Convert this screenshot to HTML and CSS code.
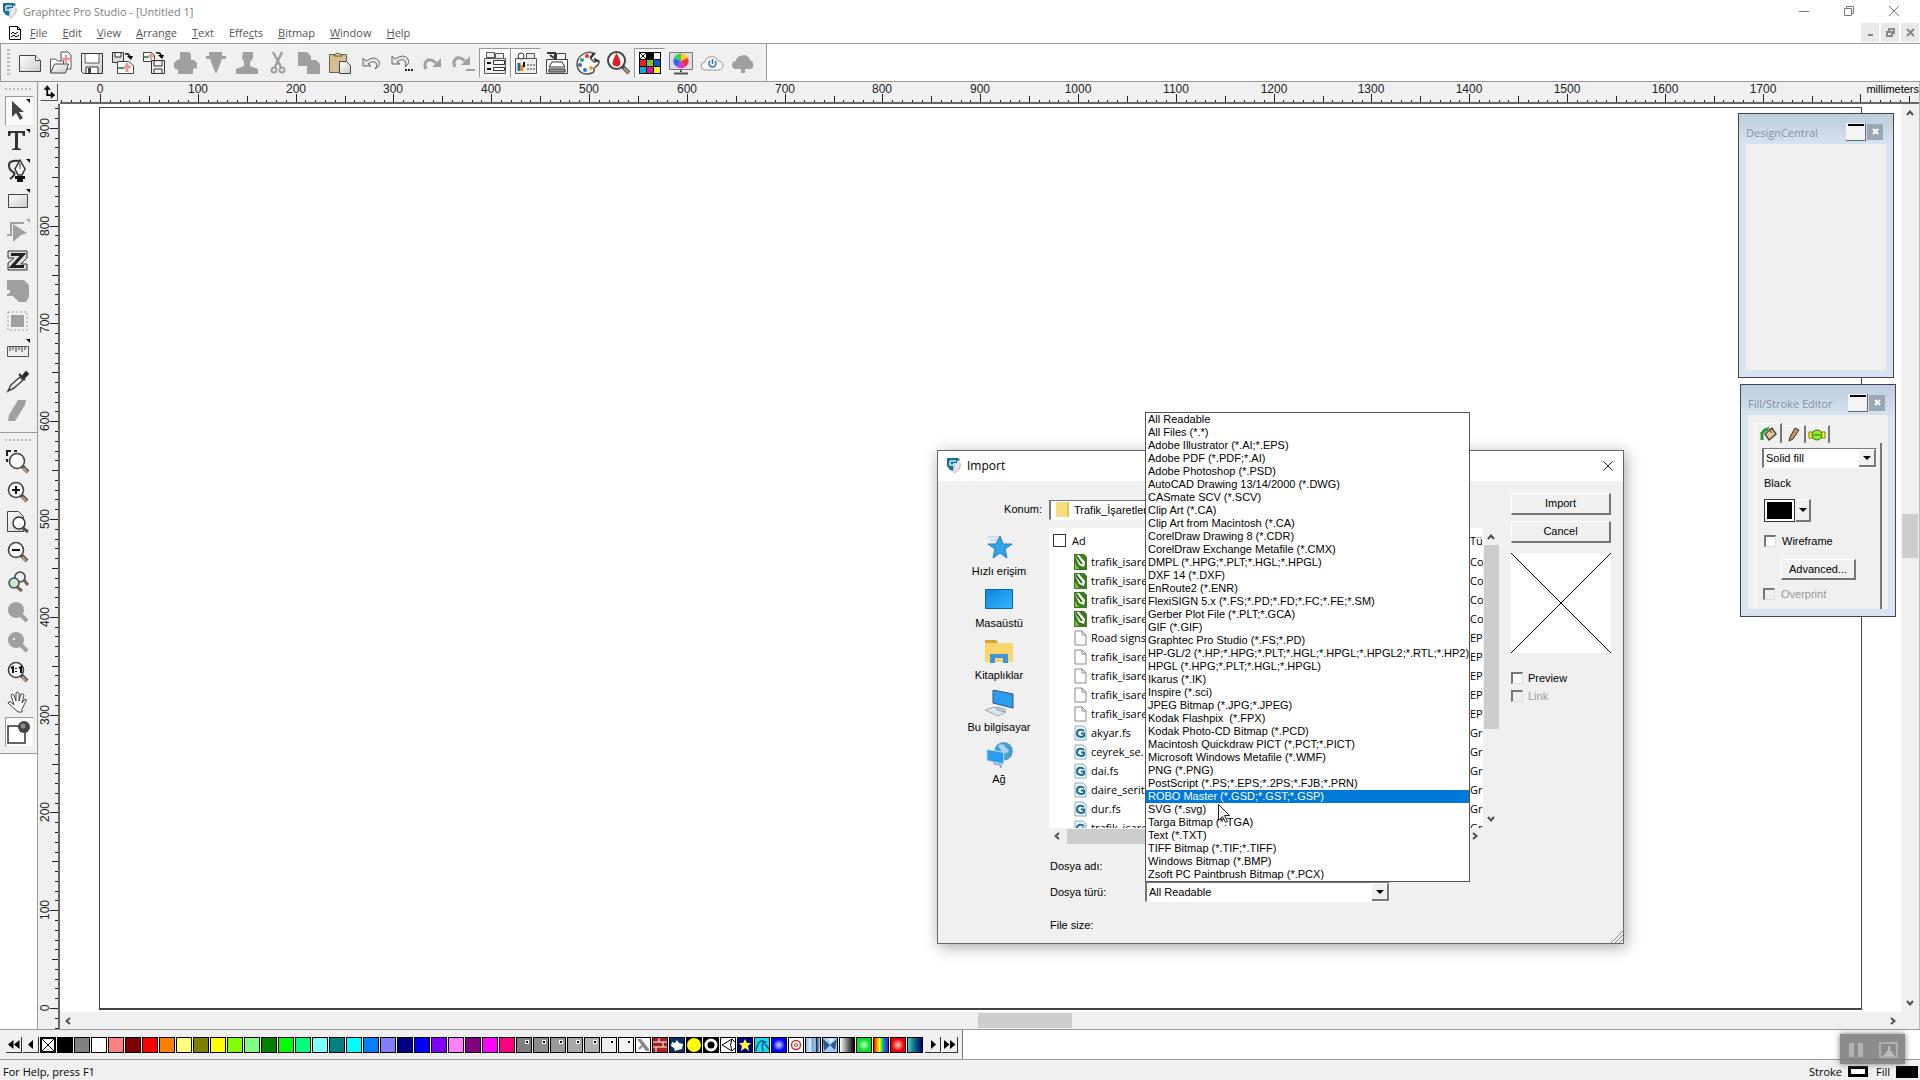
FILE: index.html
```html
<!DOCTYPE html>
<html lang="en">
<head>
<meta charset="utf-8">
<title>Graphtec Pro Studio - [Untitled 1]</title>
<link rel="stylesheet" href="styles.css">
</head>
<body>
<svg class="defs" aria-hidden="true">
  <defs>
    <linearGradient id="paper" x1="0" y1="0" x2="1" y2="1"><stop offset="0" stop-color="#fff"/><stop offset="1" stop-color="#ccc"/></linearGradient>
    <linearGradient id="sky" x1="0" y1="0" x2="1" y2="1"><stop offset="0" stop-color="#0c86e0"/><stop offset="1" stop-color="#35b4ff"/></linearGradient>
    <symbol id="app" viewBox="0 0 16 16"><path d="M1 1h13v6c0 4-3 7-6 8-3-1-5-3-6-6z" fill="#e4eaee"/><path d="M1 0h11l2 2-3 1v2H9L8 13 4 12 1 8z" fill="#1a6f95"/><path d="M4 3h6M4 3v4h4V5M8 7v7" stroke="#cfe8f2" stroke-width="1.500" fill="none"/><path d="M14 5c1 5-2 8-6 10" stroke="#d99" fill="none"/></symbol>
    <symbol id="glass" viewBox="0 0 24 24"><path d="M15 15l6 6" stroke="#555" stroke-width="4"/><path d="M16 17l4 4" stroke="#b49a78" stroke-width="2.500"/><circle cx="10" cy="10" r="7.500" fill="#fafafa" stroke="#444" stroke-width="1.600"/></symbol>
    <symbol id="glass-off" viewBox="0 0 24 24"><circle cx="10" cy="10" r="8" fill="#a0a0a0"/><path d="M14 14l7 7" stroke="#a0a0a0" stroke-width="4"/></symbol>
    <symbol id="corner" viewBox="0 0 24 24"><path d="M20 0h4v4z" fill="#000"/></symbol>
    <symbol id="cdr" viewBox="0 0 13 16"><path d="M0 0h10l3 3v13H0z" fill="#3d7a1c"/><path d="M1 2l4-1 6 7-1 5-5-2z" fill="#fff"/><path d="M2 2l6 8" stroke="#2b6b12" stroke-width="2"/><path d="M1 9l4 6H1z" fill="#7bc043"/></symbol>
    <symbol id="page" viewBox="0 0 13 16"><path d="M1 1h7l4 4v10H1z" fill="#fff" stroke="#888"/><path d="M8 1v4h4" fill="none" stroke="#888"/></symbol>
    <symbol id="gfile" viewBox="0 0 13 16"><path d="M1 1h8l3 3v11H1z" fill="#eef7fa" stroke="#8ab"/><path d="M10 6C8 4 3 4 3 8.500S9 12 10 11V8.500H7" fill="none" stroke="#1d6d94" stroke-width="2"/></symbol>
    <symbol id="up" viewBox="0 0 8 6"><path d="M1 5l3-3.500L7 5" fill="none" stroke="#505050" stroke-width="2"/></symbol>
    <symbol id="down" viewBox="0 0 8 6"><path d="M1 1l3 3.500L7 1" fill="none" stroke="#505050" stroke-width="2"/></symbol>
    <symbol id="left" viewBox="0 0 6 8"><path d="M5 1L1.500 4 5 7" fill="none" stroke="#505050" stroke-width="2"/></symbol>
    <symbol id="right" viewBox="0 0 6 8"><path d="M1 1l3.500 3L1 7" fill="none" stroke="#505050" stroke-width="2"/></symbol>
  </defs>
</svg>

<header class="titlebar">
  <svg class="i16"><use href="#app"/></svg>
  <h1>Graphtec Pro Studio - [Untitled 1]</h1>
  <div class="winbtns">
    <button aria-label="Minimize"><svg viewBox="0 0 12 12"><path d="M1 6.500h10"/></svg></button>
    <button aria-label="Restore"><svg viewBox="0 0 12 12"><path d="M1.500 3.500h7v7h-7zM3.500 3.500v-2h7v7h-2"/></svg></button>
    <button aria-label="Close"><svg viewBox="0 0 12 12"><path d="M1 1l10 10M11 1L1 11"/></svg></button>
  </div>
</header>

<nav class="menubar">
  <svg class="docicon" viewBox="0 0 12 14"><path d="M.5.500h8l3 3v10H.5z" fill="#fff" stroke="#000"/><path d="M8.500 0v3.500H12M2 8l2-2 2 2 3-2M2 11l3-2 2 2 3-2" fill="none" stroke="#000"/></svg>
  <a href="#"><u>F</u>ile</a><a href="#"><u>E</u>dit</a><a href="#"><u>V</u>iew</a><a href="#"><u>A</u>rrange</a><a href="#"><u>T</u>ext</a><a href="#">Effe<u>c</u>ts</a><a href="#"><u>B</u>itmap</a><a href="#"><u>W</u>indow</a><a href="#"><u>H</u>elp</a>
  <div class="mdibtns">
    <button aria-label="Minimize document"><svg viewBox="0 0 9 9"><path d="M2 7h5"/></svg></button>
    <button aria-label="Restore document"><svg viewBox="0 0 9 9"><path d="M1 4h5v4H1zM3 4V1h5v4H6"/></svg></button>
    <button aria-label="Close document"><svg viewBox="0 0 9 9"><path d="M1 1l7 7M8 1L1 8"/></svg></button>
  </div>
</nav>

<div class="toolrow">
  <div class="toolbar">
    <span class="grip"></span>
    <button aria-label="New"><svg viewBox="0 0 24 24"><path d="M1.500 4.500h16l5 5v11h-21z" fill="url(#paper)" stroke="#444"/><path d="M17.500 4.500v5h5" fill="#fff" stroke="#444"/></svg></button>
    <button aria-label="Open"><svg viewBox="0 0 24 24"><path d="M12 1h7l3 3v14H12z" fill="#fff" stroke="#555"/><path d="M17 4v8M13 8h8" stroke="#e99" stroke-width="2.500"/><path d="M1.500 22V8h5l2 2h6v3" fill="#fff" stroke="#555"/><path d="M1.500 22l4-9h14l-3 9z" fill="url(#paper)" stroke="#444"/></svg></button>
    <button aria-label="Save"><svg viewBox="0 0 24 24"><path d="M1.500 2.500h21v20h-19l-2-2z" fill="url(#paper)" stroke="#333"/><path d="M5 3v9h14V3" fill="#fff" stroke="#555"/><path d="M6 22v-6h12v6" fill="#fff" stroke="#333"/><path d="M8 17h3v5H8z" fill="#444"/></svg></button>
    <button aria-label="Import"><svg viewBox="0 0 24 24"><path d="M1.500 1.500h11v10h-11zM4 2v4h6V2" fill="#ddd" stroke="#333"/><path d="M6.500 10.500h11l5 4v8h-16z" fill="#fff" stroke="#444"/><path d="M7 17h6" stroke="#3a5" stroke-width="2"/><path d="M16 12v9M13 16h7" stroke="#e99" stroke-width="3"/><path d="M14 3q4-1 5 3" fill="none" stroke="#111" stroke-width="1.500"/><path d="M16 5h6l-2 4z"/></svg></button>
    <button aria-label="Export"><svg viewBox="0 0 24 24"><path d="M1.500 1.500h8l3 3v6h-11z" fill="#fff" stroke="#444"/><path d="M2 6h5" stroke="#3a5" stroke-width="2"/><path d="M9 2v7M6 5h6" stroke="#e99" stroke-width="2"/><path d="M9.500 9.500h13v13h-13zM12 10v5h8v-5M12 22v-4h8v4" fill="#eee" stroke="#333"/><path d="M14 2q4-1 5 2" fill="none" stroke="#111" stroke-width="1.500"/><path d="M16 4h6l-2 4z"/></svg></button>
    <button disabled aria-label="Print"><svg viewBox="0 0 24 24"><path d="M7 1h9l2 2v6h3l3 3v5l-4 1v5H5v-4l-4-2v-5l3-3 3-1z" fill="#a0a0a0"/></svg></button>
    <button disabled aria-label="Cut plot"><svg viewBox="0 0 24 24"><path d="M5 1h13v4h4v3h-4l-3 8-3 7-3-7-3-8H2V5h3z" fill="#a0a0a0"/></svg></button>
    <button disabled aria-label="Engrave"><svg viewBox="0 0 24 24"><path d="M8 1h10v6l-3 4v4l8 3v5H1v-5l8-3v-4L7 7z" fill="#a0a0a0"/></svg></button>
    <button disabled aria-label="Cut"><svg viewBox="0 0 24 24"><path d="M7 1l8 15M16 1L9 16" stroke="#a0a0a0" stroke-width="2.500"/><circle cx="8" cy="19" r="2.500" fill="none" stroke="#a0a0a0" stroke-width="2"/><circle cx="16" cy="19" r="2.500" fill="none" stroke="#a0a0a0" stroke-width="2"/></svg></button>
    <button disabled aria-label="Copy"><svg viewBox="0 0 24 24"><path d="M1 1h9l4 4v4h5l4 4v10H10v-8H1z" fill="#a0a0a0"/></svg></button>
    <button aria-label="Paste"><svg viewBox="0 0 24 24"><path d="M1.500 3.500h17v18h-17z" fill="#d9bd90" stroke="#665"/><path d="M6 5q0-2 2-2 1-2 4 0 2 0 2 2z" fill="#f5e060" stroke="#554"/><path d="M11.500 10.500h7l4 4v8h-11z" fill="url(#paper)" stroke="#444"/></svg></button>
    <button aria-label="Undo"><svg viewBox="0 0 24 24"><path d="M4 7v8h8l-3-2q5-4 8-1 2 3-1 6 6-3 4-8-4-6-13 0z" fill="#e4e4e4" stroke="#666"/></svg></button>
    <button aria-label="Undo steps"><svg viewBox="0 0 24 24"><path d="M2 5v8h8l-3-2q5-4 8-1 2 3 0 6 5-3 3-8-4-6-13 0z" fill="#e4e4e4" stroke="#666"/><path d="M15 19h2m1 0h2m1 0h2" stroke="#222" stroke-width="2"/></svg></button>
    <button disabled aria-label="Redo"><svg viewBox="0 0 24 24"><path d="M5 18Q2 12 7 9q4-1 8 3" fill="none" stroke="#a0a0a0" stroke-width="3"/><path d="M20 7v9h-9z" fill="#a0a0a0"/></svg></button>
    <button disabled aria-label="Redo steps"><svg viewBox="0 0 24 24"><path d="M3 16Q0 10 5 7q4-1 8 3" fill="none" stroke="#a0a0a0" stroke-width="3"/><path d="M18 5v9H9zM14 18h9v2h-9z" fill="#a0a0a0"/></svg></button>
    <button class="on" aria-label="DesignCentral"><svg viewBox="0 0 24 24"><path d="M3.500 1.500h8v5h-8zM12.500 2.500h8v5h-8zM1.500 7.500h21v15h-21z" fill="#eee" stroke="#555"/><path d="M10.500 9.500h11v4h-11zM10.500 16.500h11v3h-11z" fill="#fff" stroke="#333"/><path d="M4 12h4M4 18h4" stroke="#111" stroke-width="2"/></svg></button>
    <button class="on" aria-label="Fill/Stroke Editor"><svg viewBox="0 0 24 24"><path d="M1.500 7.500h21v15h-21zM12.500 2.500h8v5h-8z" fill="#eee" stroke="#555"/><circle cx="7" cy="5" r="3" fill="#fff" stroke="#333"/><path d="M5 12v8" stroke="#26a" stroke-width="3"/><path d="M8 14v6" stroke="#e80" stroke-width="3"/><path d="M10 11v5" stroke="#111" stroke-width="2"/><path d="M13 14h8M13 18h8" stroke="#333" stroke-dasharray="2 1"/></svg></button>
    <button aria-label="Plotter"><svg viewBox="0 0 24 24"><path d="M1.500 8.500h21v14h-21zM11.500 2.500h9v6h-9z" fill="#f4f4f4" stroke="#444"/><path d="M2 2h8v6M5 4l4 3" stroke="#333" stroke-width="2" fill="none"/><path d="M7 11h10l3 5H4z" fill="#fff" stroke="#333"/><path d="M4 18h16v3H4z" fill="#99a" stroke="#333"/></svg></button>
    <button aria-label="Swatches"><svg viewBox="0 0 24 24"><path d="M17 2C9-1 1 6 1 13c0 6 4 10 10 10 4 0 8-2 7-4-2-3 6-3 5-9l-5 1-3-3z" fill="#fafafa" stroke="#555" stroke-width="1.500"/><circle cx="11" cy="5" r="2" fill="#d33"/><circle cx="6" cy="9" r="2" fill="#2a8"/><circle cx="4" cy="14" r="2" fill="#36a"/><circle cx="9" cy="19" r="2" fill="#27d"/><circle cx="15" cy="17" r="2" fill="#e93"/><path d="M14 7l5-5M18 8l4 2" stroke="#333" stroke-width="2"/></svg></button>
    <button aria-label="Color trace"><svg viewBox="0 0 24 24"><path d="M15 15l7 7" stroke="#555" stroke-width="4"/><path d="M17 17l5 5" stroke="#b49a78" stroke-width="2"/><circle cx="9.500" cy="9.500" r="8.500" fill="#fff" stroke="#444" stroke-width="2"/><path d="M9.500 2Q4 12 6 14q4 3 7 0 2-3-3.500-12z" fill="#d22"/></svg></button>
    <button class="on" aria-label="Color palette"><svg viewBox="0 0 24 24"><path d="M1 1h22v22H1z"/><path d="M2 2h6v6H2zM16 2h6v6h-6z" fill="#fff"/><path d="M2 2l6 6m0-6L2 8" stroke="#111"/><path d="M2 9h6v6H2z" fill="#e22"/><path d="M9 9h6v6H9z" fill="#7c3"/><path d="M16 9h6v6h-6z" fill="#15c"/><path d="M2 16h6v6H2z" fill="#1ad"/><path d="M9 16h6v6H9z" fill="#d19"/><path d="M16 16h6v6h-6z" fill="#fe2"/></svg></button>
    <button aria-label="Color management"><svg viewBox="0 0 24 24"><path d="M.5 1.500h23v17H.5z" fill="#ddd" stroke="#777"/><path d="M12 10V2.500A7.500 7.500 0 0 1 19 7z" fill="#fc2"/><path d="M12 10l7-3a7.500 7.500 0 0 1-3 9z" fill="#e33"/><path d="M12 10l4 6a7.500 7.500 0 0 1-8 0z" fill="#d3d"/><path d="M12 10l-4 6a7.500 7.500 0 0 1-3-9z" fill="#36e"/><path d="M12 10L5 7a7.500 7.500 0 0 1 7-4.500z" fill="#3c5"/><path d="M12 19v2M5 22.500h14" stroke="#555" stroke-width="2"/></svg></button>
    <button aria-label="Cloud"><svg viewBox="0 0 24 24"><path d="M5 19a4 4 0 0 1 0-8 5 5 0 0 1 5-5 6 6 0 0 1 8 4 4.500 4.500 0 0 1 1 9z" fill="#f6f6f6" stroke="#999"/><path d="M10 10a3.500 3.500 0 1 0 5 0M12.500 8v5" fill="none" stroke="#27b" stroke-width="1.500"/></svg></button>
    <button disabled aria-label="Cloud upload"><svg viewBox="0 0 24 24"><path d="M5 18a4 4 0 0 1 0-8 5 5 0 0 1 5-5 6 6 0 0 1 9 4 5 5 0 0 1 1 9h-6v4h-4v-4z" fill="#a0a0a0"/></svg></button>
  </div>
</div>

<main class="workspace">
  <aside class="tools">
    <div class="toolset">
      <span class="hgrip"></span>
      <button class="on" aria-label="Select"><svg viewBox="0 0 24 24"><path d="M6 2v16l4-4 4 7 3-2-4-6h5z" fill="#444"/><use href="#corner"/></svg></button>
      <button aria-label="Text"><svg viewBox="0 0 24 24"><path d="M2 2h17v5h-2l-1-3h-4v15l3 1v1H6v-1l3-1V4H5L4 7H2z" fill="#333"/><use href="#corner"/></svg></button>
      <button aria-label="Bezier"><svg viewBox="0 0 24 24"><path d="M13 2Q3 1 3 6t4 7-3 7" fill="none" stroke="#333" stroke-width="2"/><path d="M14 1l5 9-3 6h-4l-3-6z" fill="#fff" stroke="#333" stroke-width="1.500"/><path d="M14 4v6" stroke="#333"/><path d="M9 17h10v3H9zM11 20h6v3h-6z" fill="#111"/><use href="#corner"/></svg></button>
      <button aria-label="Rectangle"><svg viewBox="0 0 24 24"><path d="M2.500 5.500h19v13h-19z" fill="url(#paper)" stroke="#444"/><use href="#corner"/></svg></button>
      <button disabled aria-label="Select point"><svg viewBox="0 0 24 24"><path d="M1 16h4V4h13" fill="none" stroke="#a0a0a0" stroke-width="2"/><path d="M7 5l14 9-6 2-8 7zM20 0h4v4z" fill="#a0a0a0"/></svg></button>
      <button aria-label="Outline"><svg viewBox="0 0 24 24"><path d="M2 2h19v7l-6 6h6v6H2v-7l6-5H2z" fill="#ddd" stroke="#333"/><path d="M5 5.500h12L6 17.500h12" fill="none" stroke="#222" stroke-width="3"/></svg></button>
      <button disabled aria-label="Combine"><svg viewBox="0 0 24 24"><path d="M1 1h17l5 5v12l-3 5h-7l-6-6H1v-2l3-1v-3H1z" fill="#a0a0a0"/></svg></button>
      <button disabled aria-label="Crop"><svg viewBox="0 0 24 24"><path d="M2 3h19v18H2z" fill="none" stroke="#a0a0a0" stroke-dasharray="2 2"/><path d="M5 6h13v12H5z" fill="#a0a0a0"/></svg></button>
      <button aria-label="Measure"><svg viewBox="0 0 24 24"><path d="M1.500 7.500h21v10h-21z" fill="#eee" stroke="#555"/><path d="M4 8v4m3-4v3m3-3v5m3-5v3m3-3v5m3-5v3" stroke="#333"/><use href="#corner"/></svg></button>
      <button aria-label="Eyedropper"><svg viewBox="0 0 24 24"><path d="M2 22l3-6 9-8 3 3-9 8z" fill="#fff" stroke="#444" stroke-width="1.500"/><path d="M13 5l6 6M16 8l4-5 2 2-4 4z" stroke="#333" stroke-width="2"/></svg></button>
      <button disabled aria-label="Knife"><svg viewBox="0 0 24 24"><path d="M12 1h8l-1 5-10 16H2l1-6z" fill="#a0a0a0"/></svg></button>
    </div>
    <div class="toolset second">
      <span class="hgrip"></span>
      <button aria-label="Zoom area"><svg viewBox="0 0 24 24"><use href="#glass" x="1" y="1"/><path d="M1 6V1h4m3 0h3M1 9v3" fill="none" stroke="#222" stroke-width="2"/></svg></button>
      <button aria-label="Zoom in"><svg viewBox="0 0 24 24"><use href="#glass"/><path d="M6 10h8m-4-4v8" stroke="#111" stroke-width="2"/></svg></button>
      <button aria-label="Zoom page"><svg viewBox="0 0 24 24"><path d="M1.500 1.500h11l5 5v15h-16z" fill="url(#paper)" stroke="#444"/><circle cx="13" cy="13" r="6" fill="#fff" stroke="#333" stroke-width="1.500"/><path d="M17 18l5 4" stroke="#555" stroke-width="3"/></svg></button>
      <button aria-label="Zoom out"><svg viewBox="0 0 24 24"><use href="#glass"/><path d="M6 10h8" stroke="#111" stroke-width="2"/></svg></button>
      <button aria-label="Zoom selected"><svg viewBox="0 0 24 24"><path d="M18 10l4 5M11 17l5 4" stroke="#765" stroke-width="3"/><circle cx="14" cy="7" r="5" fill="#eee" stroke="#444" stroke-width="1.500"/><circle cx="8" cy="13" r="5" fill="#cfe5cf" stroke="#354" stroke-width="1.500"/></svg></button>
      <button disabled aria-label="Zoom previous"><svg viewBox="0 0 24 24"><use href="#glass-off"/></svg></button>
      <button disabled aria-label="Zoom next"><svg viewBox="0 0 24 24"><use href="#glass-off"/><path d="M7 9h2" stroke="#eee" stroke-width="2"/></svg></button>
      <button aria-label="Zoom 1:1"><svg viewBox="0 0 24 24"><use href="#glass"/><path d="M5 8l2-1v6m6-5l2-1v6M10 8v1m0 2v1" fill="none" stroke="#111" stroke-width="2"/></svg></button>
      <button aria-label="Pan"><svg viewBox="0 0 24 24"><path d="M12 22L2 13q0-2 3-1l3 3L5 5q1-2 3 0l2 6V3q1-2 3 0v8l2-7q2-1 3 1l-2 8 3-4q2 0 1 2l-4 8v3z" fill="#fff" stroke="#444"/></svg></button>
      <button class="on" aria-label="Fill and stroke"><svg viewBox="0 0 24 24"><path d="M2 6h17v17H2z" fill="#fff" stroke="#333" stroke-width="1.500"/><circle cx="18" cy="7" r="6" fill="#444"/><circle cx="17" cy="6" r="2.500" fill="#888"/></svg></button>
    </div>
  </aside>
  <div class="rulercol">
    <button class="origin" aria-label="Ruler origin"><svg viewBox="0 0 18 17"><path d="M7 5v7h5" fill="none" stroke="#000" stroke-width="2"/><path d="M3 6l4-5 4 5zM11 8l5 4-5 4z"/></svg></button>
    <svg class="vruler" id="vruler"></svg>
  </div>
  <div class="desk">
    <div class="hrulerbox"><svg class="hruler" id="hruler"></svg><span>millimeters</span></div>
    <div class="view"><div class="sheet"></div></div>
    <div class="vscroll"><svg class="v"><use href="#up"/></svg><i></i><svg class="v"><use href="#down"/></svg></div>
    <div class="hscroll"><svg class="h"><use href="#left"/></svg><i></i><svg class="h"><use href="#right"/></svg></div>
  </div>

  <section class="panel design">
    <header><h2>DesignCentral</h2><button class="roll" aria-label="Roll up"></button><button class="x" aria-label="Close panel"><svg viewBox="0 0 7 7"><path d="M1 1l5 5M6 1L1 6"/></svg></button></header>
    <div class="pbody"></div>
  </section>

  <section class="panel fill">
    <header><h2>Fill/Stroke Editor</h2><button class="roll" aria-label="Roll up"></button><button class="x" aria-label="Close panel"><svg viewBox="0 0 7 7"><path d="M1 1l5 5M6 1L1 6"/></svg></button></header>
    <div class="pbody">
      <div class="tabs">
        <button class="cur" aria-label="Fill"><svg viewBox="0 0 18 16"><path d="M3 6v8" stroke="#293" stroke-width="3"/><path d="M4 7q0-3 5-4" fill="none" stroke="#293" stroke-width="3"/><path d="M6 8l7-6 4 6-7 6z" fill="#e3c9a0" stroke="#543" stroke-width="1.500"/><path d="M9 1l4 6" stroke="#543"/></svg></button>
        <button aria-label="Stroke"><svg viewBox="0 0 18 16"><path d="M5 14l1-4 5-9 4 2-6 9z" fill="#b89468" stroke="#432"/></svg></button>
        <button aria-label="Overprint"><svg viewBox="0 0 18 16"><path d="M1 5h16v6H1z" fill="#ff3" stroke="#770"/><circle cx="9" cy="8" r="5" fill="#8e3" stroke="#461"/><path d="M5 8h8" stroke="#471"/></svg></button>
      </div>
      <div class="fillform">
        <label class="combo"><select aria-label="Fill type"><option>Solid fill</option></select><span class="arrow"></span></label>
        <p>Black</p>
        <div class="well"><button class="chip" aria-label="Fill color"></button><button class="arrow" aria-label="Pick color"></button></div>
        <label class="check"><input type="checkbox">Wireframe</label>
        <button class="btn adv">Advanced...</button>
        <label class="check off"><input type="checkbox" disabled>Overprint</label>
      </div>
    </div>
  </section>

  <section class="dialog" role="dialog" aria-labelledby="dlg">
    <header><svg class="i16"><use href="#app"/></svg><h2 id="dlg">Import</h2><button aria-label="Close dialog"><svg viewBox="0 0 12 12"><path d="M1.500 1.500l9 9m0-9l-9 9"/></svg></button></header>
    <div class="dbody">
      <label class="loclabel" for="loc">Konum:</label>
      <div class="combo loc"><svg viewBox="0 0 14 16"><path d="M0 0h11l2 3v12H0z" fill="#f9dc7e"/><path d="M11 0h2v15h-2z" fill="#e8c45e"/></svg><select id="loc"><option>Trafik_İşaretleri</option></select></div>
      <nav class="places">
        <a href="#"><svg viewBox="0 0 30 24"><path d="M16 1l3 8h9l-7 5 2 9-7-5-7 5 2-9-7-5h8z" fill="#35a3ea" stroke="#1c7fc8"/><path d="M3 2h11M6 5h7" stroke="#9cf"/></svg>Hızlı erişim</a>
        <a href="#"><svg viewBox="0 0 30 24"><path d="M1.500 2.500h27v19h-27z" fill="url(#sky)" stroke="#0763ae"/></svg>Masaüstü</a>
        <a href="#"><svg viewBox="0 0 30 24"><path d="M1 1h11l2 3h15v19H1z" fill="#fbd56b"/><path d="M1 1h11l2 3H1z" fill="#d9a437"/><path d="M6 24v-9h18v9h-5v-5h-8v5z" fill="#3d95dc"/></svg>Kitaplıklar</a>
        <a href="#"><svg viewBox="0 0 30 26"><path d="M9 0l20 4v14L9 13z" fill="#2a9df0" stroke="#357"/><path d="M13 17l8 2v3l-8-2zM1 20l9-3 12 5-8 4z" fill="#dde4ea" stroke="#9ab"/></svg>Bu bilgisayar</a>
        <a href="#"><svg viewBox="0 0 30 28"><circle cx="20" cy="10" r="10" fill="#4b9fce"/><path d="M14 4q6-4 8 2l4 3q-4 6-8 1z" fill="#a8d8ee"/><path d="M2 8l18 3v13L2 20z" fill="#2a9df0" stroke="#cde"/><path d="M9 23l8 2v3" stroke="#9ab" stroke-width="2" fill="none"/></svg>Ağ</a>
      </nav>
      <div class="filebox">
        <div class="files">
          <table>
            <thead><tr><th><label><input type="checkbox">Ad</label></th><th>Tür</th></tr></thead>
            <tbody>
              <tr><td><svg><use href="#cdr"/></svg>trafik_isare</td><td>Co</td></tr>
              <tr><td><svg><use href="#cdr"/></svg>trafik_isare</td><td>Co</td></tr>
              <tr><td><svg><use href="#cdr"/></svg>trafik_isare</td><td>Co</td></tr>
              <tr><td><svg><use href="#cdr"/></svg>trafik_isare</td><td>Co</td></tr>
              <tr><td><svg><use href="#page"/></svg>Road signs</td><td>EP</td></tr>
              <tr><td><svg><use href="#page"/></svg>trafik_isare</td><td>EP</td></tr>
              <tr><td><svg><use href="#page"/></svg>trafik_isare</td><td>EP</td></tr>
              <tr><td><svg><use href="#page"/></svg>trafik_isare</td><td>EP</td></tr>
              <tr><td><svg><use href="#page"/></svg>trafik_isare</td><td>EP</td></tr>
              <tr><td><svg><use href="#gfile"/></svg>akyar.fs</td><td>Gr</td></tr>
              <tr><td><svg><use href="#gfile"/></svg>ceyrek_se.</td><td>Gr</td></tr>
              <tr><td><svg><use href="#gfile"/></svg>dai.fs</td><td>Gr</td></tr>
              <tr><td><svg><use href="#gfile"/></svg>daire_serit</td><td>Gr</td></tr>
              <tr><td><svg><use href="#gfile"/></svg>dur.fs</td><td>Gr</td></tr>
              <tr><td><svg><use href="#gfile"/></svg>trafik_isare</td><td>Gr</td></tr>
            </tbody>
          </table>
        </div>
        <div class="vscroll"><svg class="v"><use href="#up"/></svg><i></i><svg class="v"><use href="#down"/></svg></div>
        <div class="hscroll"><svg class="h"><use href="#left"/></svg><i></i><svg class="h"><use href="#right"/></svg></div>
      </div>
      <div class="fields">
        <label for="fname">Dosya adı:</label><input class="sunken" id="fname" type="text">
        <label for="ftype">Dosya türü:</label>
        <div class="combo type"><select id="ftype"><option>All Readable</option></select><span class="arrow"></span>
          <ul class="options" role="listbox" aria-label="Dosya türü">
            <li>All Readable</li><li>All Files (*.*)</li><li>Adobe Illustrator (*.AI;*.EPS)</li><li>Adobe PDF (*.PDF;*.AI)</li><li>Adobe Photoshop (*.PSD)</li><li>AutoCAD Drawing 13/14/2000 (*.DWG)</li><li>CASmate SCV (*.SCV)</li><li>Clip Art (*.CA)</li><li>Clip Art from Macintosh (*.CA)</li><li>CorelDraw Drawing 8 (*.CDR)</li><li>CorelDraw Exchange Metafile (*.CMX)</li><li>DMPL (*.HPG;*.PLT;*.HGL;*.HPGL)</li><li>DXF 14 (*.DXF)</li><li>EnRoute2 (*.ENR)</li><li>FlexiSIGN 5.x (*.FS;*.PD;*.FD;*.FC;*.FE;*.SM)</li><li>Gerber Plot File (*.PLT;*.GCA)</li><li>GIF (*.GIF)</li><li>Graphtec Pro Studio (*.FS;*.PD)</li><li>HP-GL/2 (*.HP;*.HPG;*.PLT;*.HGL;*.HPGL;*.HPGL2;*.RTL;*.HP2)</li><li>HPGL (*.HPG;*.PLT;*.HGL;*.HPGL)</li><li>Ikarus (*.IK)</li><li>Inspire (*.sci)</li><li>JPEG Bitmap (*.JPG;*.JPEG)</li><li>Kodak Flashpix&nbsp; (*.FPX)</li><li>Kodak Photo-CD Bitmap (*.PCD)</li><li>Macintosh Quickdraw PICT (*.PCT;*.PICT)</li><li>Microsoft Windows Metafile (*.WMF)</li><li>PNG (*.PNG)</li><li>PostScript (*.PS;*.EPS;*.2PS;*.FJB;*.PRN)</li><li class="hot">ROBO Master (*.GSD;*.GST;*.GSP)</li><li>SVG (*.svg)</li><li>Targa Bitmap (*.TGA)</li><li>Text (*.TXT)</li><li>TIFF Bitmap (*.TIF;*.TIFF)</li><li>Windows Bitmap (*.BMP)</li><li>Zsoft PC Paintbrush Bitmap (*.PCX)</li>
          </ul>
        </div>
        <span>File size:</span>
      </div>
      <div class="actions">
        <button class="btn">Import</button>
        <button class="btn">Cancel</button>
        <svg class="preview" viewBox="0 0 100 100"><path d="M0 0h100v100H0z" fill="#fff"/><path d="M0 0l100 100M100 0L0 100" stroke="#000"/></svg>
        <label class="check"><input type="checkbox">Preview</label>
        <label class="check off"><input type="checkbox" disabled>Link</label>
      </div>
    </div>
    <svg class="sizer" viewBox="0 0 12 12"><path d="M0 12L12 0M4 12l8-8M8 12l4-4" stroke="#888" fill="none"/></svg>
  </section>
</main>

<div class="palrow">
  <div class="palette" id="palette">
    <button class="nav" aria-label="First colors"><svg viewBox="0 0 12 9"><path d="M5.500 0v9L0 4.500zM11.500 0v9L6 4.500z"/></svg></button>
    <button class="nav" aria-label="Previous colors"><svg viewBox="0 0 12 9"><path d="M8 0v9L3 4.500z"/></svg></button>
    <div class="swatches" id="swatches"></div>
    <button class="nav" aria-label="Next colors"><svg viewBox="0 0 12 9"><path d="M4 0v9l5-4.500z"/></svg></button>
    <button class="nav" aria-label="Last colors"><svg viewBox="0 0 12 9"><path d="M0 0v9l5.500-4.500zM6 0v9l5.500-4.500z"/></svg></button>
  </div>
</div>
<footer class="status">
  <span>For Help, press F1</span>
  <span class="strokefill">Stroke <i class="st"></i> Fill <i class="fi"></i></span>
</footer>
<div class="recorder"><svg viewBox="0 0 65 30"><path d="M9 9h5v14H9zM18 9h5v14h-5z" fill="#b4b4b4"/><path d="M40 9h17v14H40z" fill="none" stroke="#b0b0b0" stroke-width="2"/><path d="M43 22l5-6v-4h2v4l5 6z" fill="#bbb"/></svg></div>
<svg class="cursor" viewBox="0 0 12 19"><path d="M.5.500v16l4-4 3 6 2-1-3-6h5z" fill="#fff" stroke="#222"/></svg>
<script src="app.js"></script>
</body>
</html>
```
FILE: styles.css
```css
* { box-sizing: border-box; }
body {
  margin: 0; min-height: 100vh; display: flex; flex-direction: column;
  position: relative; overflow: hidden; background: #fff; color: #000;
  font: 11px/16px "Open Sans", sans-serif;
}
button { font: inherit; color: inherit; padding: 0; border: 0; background: none; display: grid; place-items: center; }
h1, h2, p, ul { margin: 0; padding: 0; font: inherit; list-style: none; }
a { color: inherit; text-decoration: none; }
svg { display: block; }
.defs { position: absolute; width: 0; height: 0; }
.i16 { width: 16px; height: 16px; }

.titlebar { display: flex; align-items: center; gap: 5px; height: 22px; padding: 0 4px 0 2px; color: #808080; }
.titlebar h1 { padding-top: 2px; }
.winbtns { margin-left: auto; display: flex; }
.winbtns button { width: 45px; height: 22px; }
.winbtns svg { width: 12px; height: 12px; fill: none; stroke: #777; }

.menubar { display: flex; align-items: center; height: 22px; padding: 0 1px 0 9px; border-bottom: 1px solid #999; color: #555; }
.menubar a { margin-right: 15px; }
.docicon { width: 12px; height: 14px; margin-right: 9px; }
.mdibtns { margin-left: auto; display: flex; gap: 2px; }
.mdibtns button { width: 18px; height: 19px; background: #e9e9e9; }
.mdibtns svg { width: 9px; height: 9px; fill: none; stroke: #888; stroke-width: 2; }

.toolrow { display: flex; height: 38px; border-bottom: 1px solid #999; }
.toolbar { display: flex; align-items: center; padding: 0 8px 0 6px; background: #f0f0f0; border-right: 1px solid #999; border-left: 1px solid #999; }
.grip { width: 3px; height: 28px; margin-right: 4px; background: repeating-linear-gradient(#bbb 0 2px, transparent 2px 4px); }
.toolbar button { width: 31px; height: 30px; }
.toolbar svg, .tools svg { width: 24px; height: 24px; }
.toolbar .on, .tools .on { background: #fafafa; border: 1px solid #eee; border-top-color: #999; border-left-color: #999; }

.workspace { flex: 1; display: flex; min-height: 0; background: #fff; }
.tools { width: 38px; border-right: 1px solid #999; }
.toolset { background: #f0f0f0; padding: 6px 5px; display: flex; flex-direction: column; height: 351px; border-bottom: 1px solid #999; }
.toolset.second { height: 321px; }
.tools button { width: 29px; height: 30px; flex: none; padding-right: 3px; }
.hgrip { height: 2px; margin-bottom: 6px; flex: none; background: repeating-linear-gradient(90deg, #bbb 0 2px, transparent 2px 4px); }

.rulercol { width: 22px; background: #f0f0f0; display: flex; flex-direction: column; }
.origin { width: 18px; height: 18px; margin: 1px 2px 3px; border-right: 1px solid #555; border-bottom: 1px solid #555; border-top: 1px solid #fff; border-left: 1px solid #fff; }
.origin svg { width: 16px; height: 16px; }
.vruler { flex: 1; width: 22px; min-height: 0; border-right: 2px solid #666; }
.vruler text, .hruler text { font: 12px "Liberation Sans", sans-serif; fill: #222; }

.desk { flex: 1; display: grid; grid-template: 22px 1fr 17px / 1fr 18px; min-width: 0; border-right: 1px solid #bbb; background: #f0f0f0; }
.hrulerbox { grid-column: 1 / 3; display: flex; border-bottom: 2px solid #666; }
.hruler { flex: 1; height: 20px; min-width: 0; overflow: visible; }
.hrulerbox span { width: 60px; font: 11px/14px "Liberation Sans", sans-serif; text-align: right; white-space: nowrap; }
.view { background: #fff; padding: 3px 39px 2px 39px; display: flex; }
.sheet { flex: 1; border: 1px solid #444; border-bottom-width: 2px; }
.vscroll { display: flex; flex-direction: column; justify-content: space-between; align-items: center; background: #f0f0f0; padding: 6px 0; }
.hscroll { display: flex; justify-content: space-between; align-items: center; background: #f0f0f0; padding: 0 6px; }
svg.v { width: 8px; height: 6px; }
svg.h { width: 6px; height: 8px; }
.vscroll i, .hscroll i { background: #cdcdcd; }
.desk .vscroll i { width: 16px; height: 44px; margin-bottom: 44px; }
.desk .hscroll i { height: 15px; width: 94px; margin-left: 89px; }
.desk .hscroll { padding: 0 5px; }

.panel { position: absolute; width: 156px; padding: 5px 7px 7px; border: 1px solid #445; background: linear-gradient(#bccddd, #d8e4f0 32px); display: flex; flex-direction: column; }
.panel.design { left: 1738px; top: 113px; height: 265px; }
.panel.fill { left: 1740px; top: 384px; height: 233px; }
.panel header { display: flex; align-items: center; gap: 1px; height: 25px; flex: none; color: #8592a0; }
.panel h2 { flex: 1; white-space: nowrap; padding-top: 3px; }
.roll { width: 20px; height: 18px; background: #f4f4f4; border-right: 1px solid #667; border-bottom: 1px solid #667; }
.roll::before { content: ""; width: 16px; height: 2px; background: #000; margin-bottom: 12px; }
.x { width: 16px; height: 16px; background: #9ba8b4; margin-right: 3px; }
.x svg { width: 7px; height: 7px; stroke: #fff; stroke-width: 2; }
.pbody { flex: 1; background: #f0f0f0; font: 11px/13px "Liberation Sans", sans-serif; }
.fill .pbody { padding: 8px 6px 0 7px; display: flex; flex-direction: column; }
.tabs { display: flex; align-items: flex-end; }
.tabs button { width: 24px; height: 18px; border-top: 1px solid #fff; border-right: 2px solid #777; }
.tabs .cur { width: 27px; height: 20px; border-left: 1px solid #fff; }
.tabs svg { width: 18px; height: 16px; }
.fillform { flex: 1; border-right: 2px solid #777; border-left: 1px solid #fff; padding: 5px 3px 0 6px; display: flex; flex-direction: column; }
.fillform p { margin: 9px 2px; }
.combo { display: flex; align-items: stretch; position: relative; height: 20px; background: #fff; border: 1px solid #fff; border-top-color: #777; border-left: 2px solid #777; }
.combo select { flex: 1; min-width: 0; appearance: none; border: 0; background: none; padding: 0 2px; font: inherit; color: #000; }
.arrow { width: 17px; background: #f0f0f0; border-right: 2px solid #777; border-bottom: 2px solid #777; border-top: 1px solid #fff; display: grid; place-items: center; }
.arrow::before { content: ""; border: 4px solid transparent; border-top-color: #000; border-bottom: 0; }
.well { display: flex; gap: 1px; height: 23px; margin-left: 2px; }
.chip { width: 31px; border: 1px solid #333; background: #000; box-shadow: inset 0 0 0 2px #fff; }
.well .arrow { width: 15px; }
.check { display: flex; align-items: center; gap: 5px; height: 14px; }
.check input { appearance: none; width: 12px; height: 12px; margin: 0; background: #fff; border: 1px solid #ddd; border-top: 2px solid #777; border-left: 2px solid #777; }
.fillform .check { gap: 6px; margin: 12px 0 0 2px; }
.check.off { color: #999; }
.check.off input { background: #f0f0f0; }
.btn { height: 22px; border: 1px solid #fff; border-right: 2px solid #777; border-bottom: 2px solid #777; background: #f0f0f0; }
.adv { width: 75px; height: 21px; margin-left: 19px; margin-top: 11px; }
.fillform .off { margin: 7px 0 0 1px; }

.dialog { position: absolute; left: 937px; top: 450px; width: 687px; border: 1px solid #666; background: #f0f0f0; box-shadow: 2px 3px 14px rgba(0, 0, 0, .35); font: 11px/13px "Liberation Sans", sans-serif; }
.dialog header { display: flex; align-items: center; gap: 5px; height: 30px; padding: 0 8px; background: #fff; font: 12px/16px "Open Sans", sans-serif; }
.dialog header button { margin-left: auto; width: 14px; height: 30px; }
.dialog header svg:not(.i16) { width: 12px; height: 12px; stroke: #222; }
.dbody { display: grid; grid-template-columns: 111px 450px 100px; grid-template-rows: 20px 316px 91px; row-gap: 8px; padding-top: 19px; }
.loclabel { text-align: right; padding: 3px 7px 0 0; }
.loc { width: 330px; }
.loc svg { width: 14px; height: 16px; margin: 1px 2px 0 5px; }
.places { padding: 6px 0 0 11px; display: flex; flex-direction: column; }
.places a { height: 52px; display: grid; justify-items: center; align-content: space-between; padding-bottom: 8px; }
.places svg { width: 30px; height: 26px; }
.filebox { display: grid; grid-template: 1fr 16px / 1fr 16px; overflow: hidden; }
.files { background: #fff; overflow: hidden; height: 300px; font: 11px/19px "Open Sans", sans-serif; }
table { width: 434px; table-layout: fixed; border-collapse: collapse; }
th { text-align: left; font-weight: 400; height: 24px; padding: 0; overflow: hidden; }
th:first-child { width: 421px; }
th:last-child, td:last-child { white-space: nowrap; overflow: hidden; }
th label { display: flex; align-items: center; gap: 6px; padding-left: 4px; }
th input { appearance: none; width: 13px; height: 13px; border: 1px solid #333; margin: 0; background: #fff; }
td { height: 19px; padding: 0; }
td svg { width: 13px; height: 16px; display: inline-block; vertical-align: middle; margin: -2px 4px 0 25px; }
.filebox .vscroll i { width: 15px; height: 184px; margin: 0 0 82px; }
.filebox .vscroll { padding: 6px 0; }
.filebox .hscroll i { height: 15px; width: 300px; margin: 0 98px 0 0; }
.filebox .hscroll { padding: 0 5px; }
.fields { grid-column: 2; display: grid; grid-template: repeat(3, 20px) / 95px 245px; row-gap: 6px; align-items: center; padding: 4px 0 0 1px; }
.fields > span { padding-top: 14px; }
.sunken { height: 20px; border: 1px solid #fff; border-top-color: #777; border-left: 2px solid #777; }
.options { position: absolute; bottom: 19px; left: -2px; width: max-content; min-width: 321px; border: 1px solid #555; background: #fff; z-index: 2; white-space: nowrap; }
.options li { height: 13px; line-height: 13px; padding-left: 2px; }
.hot { background: #0078d7; color: #fff; }
.actions { grid-column: 3; grid-row: 1 / 4; margin: -7px 0 0 12px; display: flex; flex-direction: column; gap: 6px; width: 100px; }
.preview { width: 100px; height: 100px; margin: 4px 0 12px; }
.actions .off { margin-top: -2px; }
.sizer { position: absolute; right: 0; bottom: 0; width: 12px; height: 12px; }

.palrow { height: 31px; display: flex; border-top: 1px solid #999; border-bottom: 1px solid #999; }
.palette { display: flex; align-items: center; background: #f0f0f0; padding: 0 4px 0 6px; border-right: 1px solid #777; gap: 1px; }
.nav { width: 16px; height: 16px; border-right: 1px solid #333; border-bottom: 1px solid #333; }
.nav svg { width: 12px; height: 9px; }
.swatches { display: flex; gap: 1px; margin-right: 1px; }
.swatches button { width: 16px; height: 16px; border: 1px solid #000; }
.swatches svg { width: 14px; height: 14px; }

.status { height: 20px; display: flex; align-items: center; justify-content: space-between; background: #f0f0f0; padding: 3px 2px 0 3px; }
.strokefill { display: flex; align-items: center; gap: 6px; }
.st { width: 20px; height: 11px; border: 3px solid #000; background: #fff; margin-right: 2px; }
.fi { width: 22px; height: 12px; background: #000; }
.recorder { position: absolute; right: 15px; bottom: 16px; width: 65px; height: 30px; background: rgba(120, 120, 120, .85); box-shadow: 0 0 6px #777; }
.cursor { position: absolute; left: 1218px; top: 804px; width: 12px; height: 19px; z-index: 3; }
```
FILE: app.js
```js
const SCALE = 0.978;
const ns = 'http://www.w3.org/2000/svg';

function el(parent, name, attrs, text) {
  const node = document.createElementNS(ns, name);
  for (const key in attrs) node.setAttribute(key, attrs[key]);
  if (text !== undefined) node.textContent = text;
  parent.appendChild(node);
}

// Horizontal ruler: a tick every 10 mm, a longer one every 50, a label every 100.
const h = document.getElementById('hruler');
for (let mm = -40; mm <= 1850; mm += 10) {
  const x = Math.round(40 + mm * SCALE);
  const len = mm % 100 === 0 ? 8 : mm % 50 === 0 ? 6 : 2;
  el(h, 'rect', { x, y: 20 - len, width: 1, height: len, fill: '#222' });
  if (mm % 100 === 0 && mm < 1800) el(h, 'text', { x, y: 11, 'text-anchor': 'middle' }, mm);
}

// Vertical ruler, with the labels turned to read upwards.
const v = document.getElementById('vruler');
for (let mm = -20; mm <= 920; mm += 10) {
  const y = Math.round(904 - mm * SCALE);
  const len = mm % 100 === 0 ? 8 : mm % 50 === 0 ? 6 : 3;
  el(v, 'rect', { x: 20 - len, y, width: len, height: 1, fill: '#222' });
  if (mm % 100 === 0) el(v, 'text', { transform: `translate(11 ${y}) rotate(-90)`, 'text-anchor': 'middle' }, mm);
}

// Palette: plain colors first, then the patterns and the gradients.
const dot = '<path d="M8 2h4v4H8z" fill="#fff"/><path d="M9 3h2v2H9z"/>';
const swatches = [
  ['#fff', '<path d="M1 1l12 12M13 1L1 13" stroke="#000"/><path d="M.5.500h13v13H.5z" fill="none" stroke="#000"/>'],
  ...['#000', '#808080', '#fff', '#ff8080', '#800000', '#f00', '#ff8000', '#ffff80', '#808000', '#ff0', '#80ff00', '#80ff80',
    '#008000', '#0f0', '#00ff80', '#80ffff', '#008080', '#0ff', '#0080ff', '#8080ff', '#000080', '#00f', '#8000ff',
    '#ff80ff', '#800080', '#f0f', '#ff0080'].map(c => [c, '']),
  ...['#808080', '#8c8c8c', '#999', '#a8a8a8', '#b0b0b0', '#eee', '#f2f2f2'].map(c => [c, dot]),
  ['#fff', '<path d="M1 1h4l8 10v2h-3z" fill="#888"/><path d="M3 11l5-5" stroke="#888" stroke-width="2"/>'],
  ['#a22', '<path d="M0 4h14M0 9h14M6 0v4M3 9v5M10 4v5" stroke="#fff"/>'],
  ['#036', '<path d="M2 4l3 1 2-3 2 3 4 1-1 5-4 1-3 1-1-3-3-2z" fill="#fff"/>'],
  ['#000', '<circle cx="7" cy="7" r="7" fill="#ff0"/>'],
  ['#000', '<circle cx="7" cy="7" r="5" fill="none" stroke="#fff" stroke-width="3"/>'],
  ['#fff', '<path d="M11 1L1 7l10 6q-3-6 0-12zM11 1l3 3M11 13l3-3" fill="none" stroke="#000"/>'],
  ['#008', '<path d="M7 1l2 4h4l-3 3 1 5-4-3-4 3 1-5-3-3h4z" fill="#ff3"/>'],
  ['#1de', '<path d="M1 13Q3 0 10 4q-4 1-2 9M10 6l4 5" fill="none" stroke="#058" stroke-width="1.500"/>'],
  ['radial-gradient(#cdf, #00f 60%)', ''],
  ['#fff', '<circle cx="7" cy="7" r="4.500" fill="none" stroke="#c33" stroke-width="1.500"/><circle cx="7" cy="7" r="1.500" fill="none" stroke="#c33"/>'],
  ['linear-gradient(90deg, #8be, #def 30%, #69c 50%, #bdf 65%, #135 75%, #bdf)', ''],
  ['#9cf', '<path d="M0 1l7 6-6 6zM14 1L7 7l5 5z" fill="#357"/><path d="M5 0l3 5 3-4" fill="#eef"/>'],
  ['linear-gradient(90deg, #fff, #000)', ''],
  ['radial-gradient(#cfc, #0d2 60%)', ''],
  ['linear-gradient(90deg, #f00, #f90, #ff0, #0d4, #06f, #80c)', ''],
  ['radial-gradient(#fcc, #e00 60%)', ''],
  ['linear-gradient(90deg, #5cc, #178 40%, #006)', '']
];
document.getElementById('swatches').innerHTML = swatches.map(([bg, art], i) =>
  `<button aria-label="Color ${i}" style="background:${bg}">${art ? `<svg viewBox="0 0 14 14">${art}</svg>` : ''}</button>`).join('');
```
